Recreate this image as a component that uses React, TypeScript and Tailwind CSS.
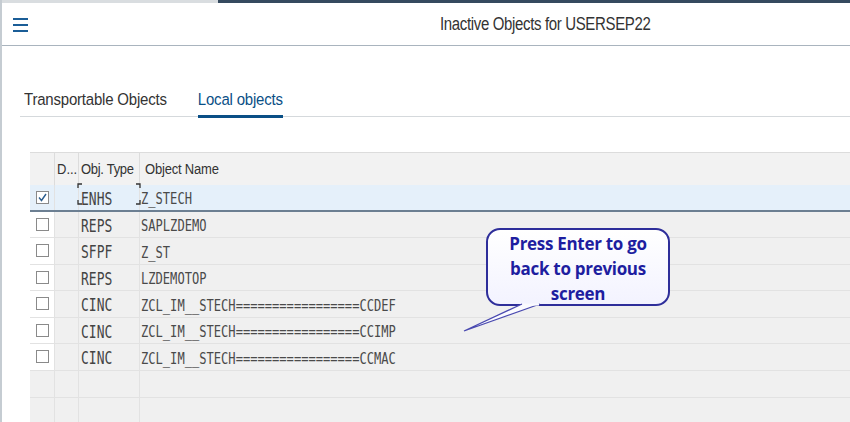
const rows = [
  { type: "ENHS", name: "Z_STECH", checked: true },
  { type: "REPS", name: "SAPLZDEMO" },
  { type: "SFPF", name: "Z_ST" },
  { type: "REPS", name: "LZDEMOTOP" },
  { type: "CINC", name: "ZCL_IM__STECH=================CCDEF" },
  { type: "CINC", name: "ZCL_IM__STECH=================CCIMP" },
  { type: "CINC", name: "ZCL_IM__STECH=================CCMAC" },
];

const sans = "font-['Liberation_Sans',Arial,sans-serif]";
const mono = "font-['DejaVu_Sans_Mono','Liberation_Mono',monospace]";

function Checkbox({ checked }: { checked?: boolean }) {
  return (
    <div className="w-[13px] h-[13px] border border-[#8a8a8a] bg-white flex items-center justify-center">
      {checked && (
        <svg width="11" height="11" viewBox="0 0 11 11">
          <path d="M2 5.5 L4.5 8.5 L9 2" fill="none" stroke="#2a5d8f" strokeWidth="1.4" />
        </svg>
      )}
    </div>
  );
}

function FocusCorners() {
  return (
    <svg className="absolute left-[-2px] top-[-2px]" width="64" height="22" viewBox="0 0 64 22">
      <path d="M1 5 V1 H5 M59 1 H63 V5 M1 17 V21 H5 M59 21 H63 V17" fill="none" stroke="#333" strokeWidth="1.3" />
    </svg>
  );
}

export default function App() {
  return (
    <div className={`relative w-[850px] h-[422px] overflow-hidden bg-white border-l-2 border-[#c5ccd2] ${sans}`}>
      <div className="flex h-[3px]">
        <div className="w-[216px] bg-[#d9dde0]" />
        <div className="flex-1 bg-[#354a5f]" />
      </div>

      <div className="h-[43px] border-b border-[#a9b4be] flex items-center">
        <div className="ml-[11px] mt-[1px] flex flex-col gap-[4px] w-[15px]">
          <div className="h-[2px] bg-[#1b5d97]" />
          <div className="h-[2px] bg-[#1b5d97]" />
          <div className="h-[2px] bg-[#1b5d97]" />
        </div>
        <div className="ml-[412px] text-[15px] text-[#333] tracking-[-0.35px] scale-y-[1.2]">Inactive Objects for USERSEP22</div>
      </div>

      <div className="mt-[42px] ml-[18px] h-[29px] border-b border-[#d5d9dc] flex gap-[31px] pl-[4px] text-[15px]">
        <div className="text-[#333] pt-[1px] tracking-[-0.2px]">
          <span className="inline-block scale-y-[1.1]">Transportable Objects</span>
        </div>
        <div className="text-[#0a4f86] pt-[1px] border-b-[3px] border-[#0a4f86] h-[30px] tracking-[-0.2px]">
          <span className="inline-block scale-y-[1.1]">Local objects</span>
        </div>
      </div>

      <div className="mt-[35px] ml-[28px] text-[13px] text-[#333]">
        <div className="grid grid-cols-[25px_24px_61px_1fr] h-[33px] bg-[#f2f2f2] border-t border-[#dcdcdc]">
          <div className="border-r border-[#dcdcdc]" />
          <div className="border-r border-[#dcdcdc] flex items-center pl-[2px]">
            <span className="inline-block scale-y-[1.15]">D...</span>
          </div>
          <div className="border-r border-[#dcdcdc] flex items-center pl-[2px] tracking-[-0.3px]">
            <span className="inline-block scale-y-[1.15]">Obj. Type</span>
          </div>
          <div className="flex items-center pl-[5px] tracking-[-0.2px]">
            <span className="inline-block scale-y-[1.15]">Object Name</span>
          </div>
        </div>

        {rows.map((r, i) => (
          <div
            key={i}
            className={`grid grid-cols-[25px_24px_61px_1fr] h-[26.5px] ${
              r.checked ? "bg-[#e5f0fa] border-b-2 border-[#6c7f92]" : "bg-[#f0f0f0] border-b border-[#e2e2e2]"
            }`}
          >
            <div className={`flex items-center justify-center border-r border-[#e2e2e2] ${r.checked ? "" : "bg-white"}`}>
              <Checkbox checked={r.checked} />
            </div>
            <div className="border-r border-[#e2e2e2]" />
            <div className={`relative flex items-center pl-[2px] pt-[4px] border-r border-[#e2e2e2] ${mono} text-[13px] text-[#444]`}>
              {r.checked && <FocusCorners />}
              <span className="inline-block scale-y-[1.3]">{r.type}</span>
            </div>
            <div className={`flex items-center pl-[1px] pt-[4px] ${mono} text-[12.1px] text-[#4a4a4a]`}>
              <span className="inline-block scale-y-[1.35]">{r.name}</span>
            </div>
          </div>
        ))}

        {[0, 1].map((i) => (
          <div key={i} className="grid grid-cols-[25px_24px_61px_1fr] h-[27px] bg-[#f0f0f0] border-b border-[#e2e2e2]">
            <div className="border-r border-[#e2e2e2]" />
            <div className="border-r border-[#e2e2e2]" />
            <div className="border-r border-[#e2e2e2]" />
            <div />
          </div>
        ))}
      </div>

      <div className="absolute left-[484px] top-[228px] w-[184px] h-[78px] rounded-[14px] border-2 border-[#2e2e9a] bg-gradient-to-b from-white to-[#f3f3ff] flex flex-col items-center justify-center font-['Open_Sans',sans-serif] font-bold text-[17px] leading-[25px] text-[#1e1ea0] tracking-[-0.3px]">
        <div className="scale-y-[1.08]">Press Enter to go</div>
        <div className="scale-y-[1.08]">back to previous</div>
        <div className="scale-y-[1.08]">screen</div>
      </div>
      <svg className="absolute left-[458px] top-[300px]" width="90" height="34" viewBox="0 0 90 34">
        <path d="M62 4 L4 31 L80 4" fill="#fbfbff" stroke="#4a4ab0" strokeWidth="1.3" />
        <path d="M63 4.6 L79 4.6" stroke="#fbfbff" strokeWidth="2" />
      </svg>
    </div>
  );
}
